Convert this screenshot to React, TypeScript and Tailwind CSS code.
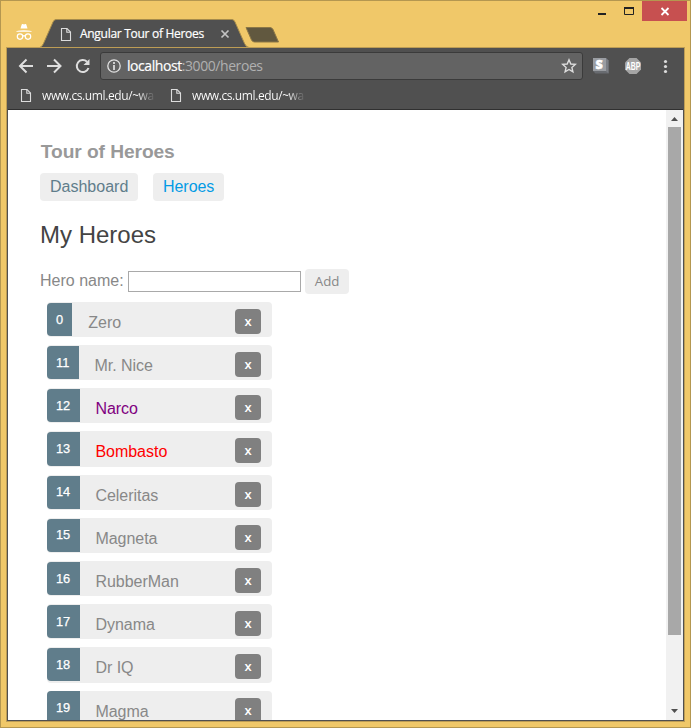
import React from "react";

type Hero = { id: number; name: string; nameClass: string };

const heroes: Hero[] = [
  { id: 0, name: "Zero", nameClass: "text-[#888888]" },
  { id: 11, name: "Mr. Nice", nameClass: "text-[#888888]" },
  { id: 12, name: "Narco", nameClass: "text-[#800080]" },
  { id: 13, name: "Bombasto", nameClass: "text-[#ff0000]" },
  { id: 14, name: "Celeritas", nameClass: "text-[#888888]" },
  { id: 15, name: "Magneta", nameClass: "text-[#888888]" },
  { id: 16, name: "RubberMan", nameClass: "text-[#888888]" },
  { id: 17, name: "Dynama", nameClass: "text-[#888888]" },
  { id: 18, name: "Dr IQ", nameClass: "text-[#888888]" },
  { id: 19, name: "Magma", nameClass: "text-[#888888]" },
];

function PageIcon() {
  return (
    <svg width="12" height="15" viewBox="0 0 12 15" fill="none" stroke="#dcdcdc" strokeWidth="1.100" className="shrink-0">
      <path d="M1.500 1.500h5.500L10.500 5v8.500h-9z" />
      <path d="M6.800 1.500V5.200H10.500" />
    </svg>
  );
}

function TitleBar() {
  return (
    <div className="relative flex h-[46px] shrink-0">
      <svg width="690" height="46" viewBox="1 1 690 46" className="absolute left-0 top-0">
        <path d="M7 47.5H39.500Q42 47 43.500 43.500L53 22Q54 19.500 56 19.500H232Q234 19.500 235 22L244.500 43.500Q246 47 249 47.500H684" fill="#505050" stroke="#a58b4c" />
        <path d="M246 27.500H270Q272 27.500 273 29.500L278.500 42H254.500Q252.500 42 251.500 40z" fill="#61583f" stroke="#8b7747" />
        <g fill="#fff">
          <path d="M20.500 28.500L21.700 24.600Q22 23.800 22.900 24.100L24 24.500L25.200 24.100Q26 23.800 26.300 24.600L27.500 28.500z" />
          <path d="M16 31.800Q16 30.500 24 30.200Q32 30.500 32 31.800z" />
        </g>
        <g fill="none" stroke="#fff" strokeWidth="1.200">
          <circle cx="20" cy="36.600" r="2.700" />
          <circle cx="28" cy="36.600" r="2.700" />
          <path d="M22.700 36.200Q24 35.200 25.300 36.200" />
        </g>
        <path d="M221.500 30.500l7 7m0-7l-7 7" stroke="#c4c4c4" strokeWidth="1.700" />
        <path d="M598 13h8v2h-8z" fill="#222" />
        <path d="M624.500 8.500h9v6h-9z" fill="none" stroke="#222" />
        <path d="M624 8h10" stroke="#222" strokeWidth="2" />
        <path d="M642 1h45v20h-45z" fill="#c75050" />
        <path d="M661.500 8l7 7m0-7l-7 7" stroke="#fff" strokeWidth="1.800" />
      </svg>
      <div className="relative ml-[59px] mt-[25px] flex h-[16px] items-center gap-[8px]">
        <PageIcon />
        <span className="whitespace-nowrap font-['Open_Sans','Noto_Sans',sans-serif] text-[12px] leading-[16px] tracking-[-0.290px] text-white [-webkit-text-stroke:0.200px_white]">Angular Tour of Heroes</span>
      </div>
    </div>
  );
}

function Toolbar() {
  return (
    <div className="flex h-[35px] items-center pl-[1px]">
      <svg width="82" height="20" viewBox="0 0 82 20" fill="none" stroke="#dedede" strokeWidth="2" className="ml-[10px] shrink-0">
        <path d="M15 10H2.500M8.500 3.500L2 10L8.500 16.500" />
        <path d="M29 10H42M36 3.500L42.500 10L36 16.500" />
        <path d="M70.500 12A6 6 0 1 1 69 5.700" />
        <path d="M71.500 3v6h-6z" fill="#dedede" stroke="none" />
      </svg>
      <div className="flex h-[28px] w-[483px] shrink-0 items-center rounded-[3px] border border-[#3b3b3b] bg-[#636363] px-[6px]">
        <svg width="14" height="14" viewBox="0 0 14 14" fill="none" stroke="#e2e2e2" className="shrink-0">
          <circle cx="7" cy="7" r="6.200" strokeWidth="1.300" />
          <path d="M7 6v5M7 3v2" strokeWidth="1.700" />
        </svg>
        <div className="ml-[6px] flex-1 whitespace-nowrap font-['Open_Sans','Noto_Sans',sans-serif] text-[14px] leading-[20px] tracking-[-0.430px] text-[#b0b0b0]"><span className="text-white [-webkit-text-stroke:0.200px_white]">localhost</span>:3000/heroes</div>
        <svg width="16" height="16" viewBox="0 0 16 16" fill="none" stroke="#dedede" strokeWidth="1.400" className="-mr-[1px] shrink-0">
          <path d="M8 1.800L9.800 6L14.300 6.400L10.900 9.400L11.900 13.900L8 11.500L4.100 13.900L5.100 9.400L1.700 6.400L6.200 6z" />
        </svg>
      </div>
      <svg width="86" height="24" viewBox="590 54 86 24" className="ml-[7px] shrink-0">
        <path d="M593 58h13l2.500 2.500v13h-13l-2.500-2.500z" fill="#686b70" />
        <path d="M593 58h13v13h-13z" fill="#9a9da2" />
        <path d="M606 58l2.500 2.500v13l-2.500-2.500z" fill="#7b7e84" />
        <text x="599.200" y="69" textAnchor="middle" fontSize="12.500" fontWeight="900" fontFamily="Open Sans, sans-serif" fill="#fff" stroke="#fff" strokeWidth="0.500">S</text>
        <path d="M629.500 58h7l4.500 4.500v7l-4.500 4.500h-7l-4.500-4.500v-7z" fill="#a5a5a5" />
        <text x="633" y="69.500" textAnchor="middle" fontSize="10" fontWeight="700" textLength="14.500" lengthAdjust="spacingAndGlyphs" fontFamily="Liberation Sans, sans-serif" fill="#fff">ABP</text>
        <g fill="#dcdcdc">
          <circle cx="665.500" cy="61.500" r="1.600" />
          <circle cx="665.500" cy="66.500" r="1.600" />
          <circle cx="665.500" cy="71.500" r="1.600" />
        </g>
      </svg>
    </div>
  );
}

function Bookmark() {
  return (
    <div className="flex w-[150px] items-center gap-[10px]">
      <PageIcon />
      <span className="whitespace-nowrap bg-linear-to-r from-white from-85% to-[#606060] bg-clip-text font-['Open_Sans','Noto_Sans',sans-serif] text-[12px] font-medium leading-[16px] tracking-[-0.400px] text-transparent">www.cs.uml.edu/~wa</span>
    </div>
  );
}

function HeroRow({ hero }: { hero: Hero }) {
  return (
    <li className="flex h-[35.200px] w-[225px] shrink-0 items-start rounded-[4px] bg-[#eeeeee]">
      <span className="mt-[0.900px] h-[33.200px] shrink-0 rounded-l-[4px] bg-[#607d8b] pl-[9px] pt-[8.800px] pr-[9.350px] text-[12.800px] leading-[16px] text-white [-webkit-text-stroke:0.250px_white]">{hero.id}</span>
      <span className={"ml-[15.800px] mt-[12px] text-[16px] leading-[18px] tracking-[-0.020px] " + hero.nameClass}>{hero.name}</span>
      <button className="ml-auto mr-[11px] mt-[7px] h-[25px] w-[26px] rounded-[4px] bg-[#808080] pb-[1px] font-['Open_Sans','Noto_Sans',sans-serif] text-[13px] font-semibold leading-[22px] text-white">x</button>
    </li>
  );
}

export default function App() {
  return (
    <div className="flex h-[728px] w-[691px] flex-col overflow-hidden border border-[#b49750] bg-[#f0c869] font-['Liberation_Sans',Arial,sans-serif]">
      <TitleBar />
      <div className="ml-[5px] flex h-[675px] w-[679px] shrink-0 flex-col border border-[#bd9d55] bg-[#505050]">
        <Toolbar />
        <div className="flex h-[26px] shrink-0 items-center pl-[13px] pb-[1px]">
          <Bookmark />
          <Bookmark />
        </div>
        <div className="mx-px mb-px flex min-h-0 flex-1 border-t border-[#303030]">
          <main className="flex min-w-0 flex-1 flex-col overflow-hidden bg-white pl-[32px]">
            <h1 className="ml-[0.800px] mt-[31px] text-[19.200px] font-bold leading-[22px] tracking-[-0.080px] text-[#999999]">Tour of Heroes</h1>
            <nav className="mt-[10px] flex h-[28px] shrink-0 gap-[15px] text-[16px] leading-[27px]">
              <a className="w-[98px] rounded-[4px] bg-[#eeeeee] px-[10px] text-[#607d8b]">Dashboard</a>
              <a className="w-[71px] rounded-[4px] bg-[#eeeeee] px-[10px] tracking-[-0.050px] text-[#039be5]">Heroes</a>
            </nav>
            <h2 className="mt-[20px] text-[24px] leading-[27px] text-[#444444]">My Heroes</h2>
            <div className="mt-[20px] flex h-[26px] shrink-0 items-center text-[16px] text-[#888888]">
              <label className="pb-[1px]">Hero name:</label>
              <input className="ml-[4px] h-[21px] w-[173px] border border-[#a9a9a9] bg-white" />
              <button className="ml-[4px] h-[25px] w-[44px] rounded-[4px] bg-[#eeeeee] pl-[1px] font-['Open_Sans','Noto_Sans',sans-serif] text-[13.300px] leading-[24px]">Add</button>
            </div>
            <ul className="ml-[7px] mt-[7.870px] flex flex-col gap-[8px]">
              {heroes.map((hero) => (
                <HeroRow key={hero.id} hero={hero} />
              ))}
            </ul>
          </main>
          <div className="flex w-[17px] shrink-0 flex-col items-center bg-[#f1f1f1]">
            <svg width="17" height="17" viewBox="0 0 17 17" className="shrink-0">
              <path d="M5 11l3.500-4L12 11z" fill="#505050" />
            </svg>
            <div className="h-[508px] w-[13px] bg-[#a8a8a8]" />
            <svg width="17" height="17" viewBox="0 0 17 17" className="mt-auto shrink-0">
              <path d="M5 6l3.500 4L12 6z" fill="#505050" />
            </svg>
          </div>
        </div>
      </div>
    </div>
  );
}
